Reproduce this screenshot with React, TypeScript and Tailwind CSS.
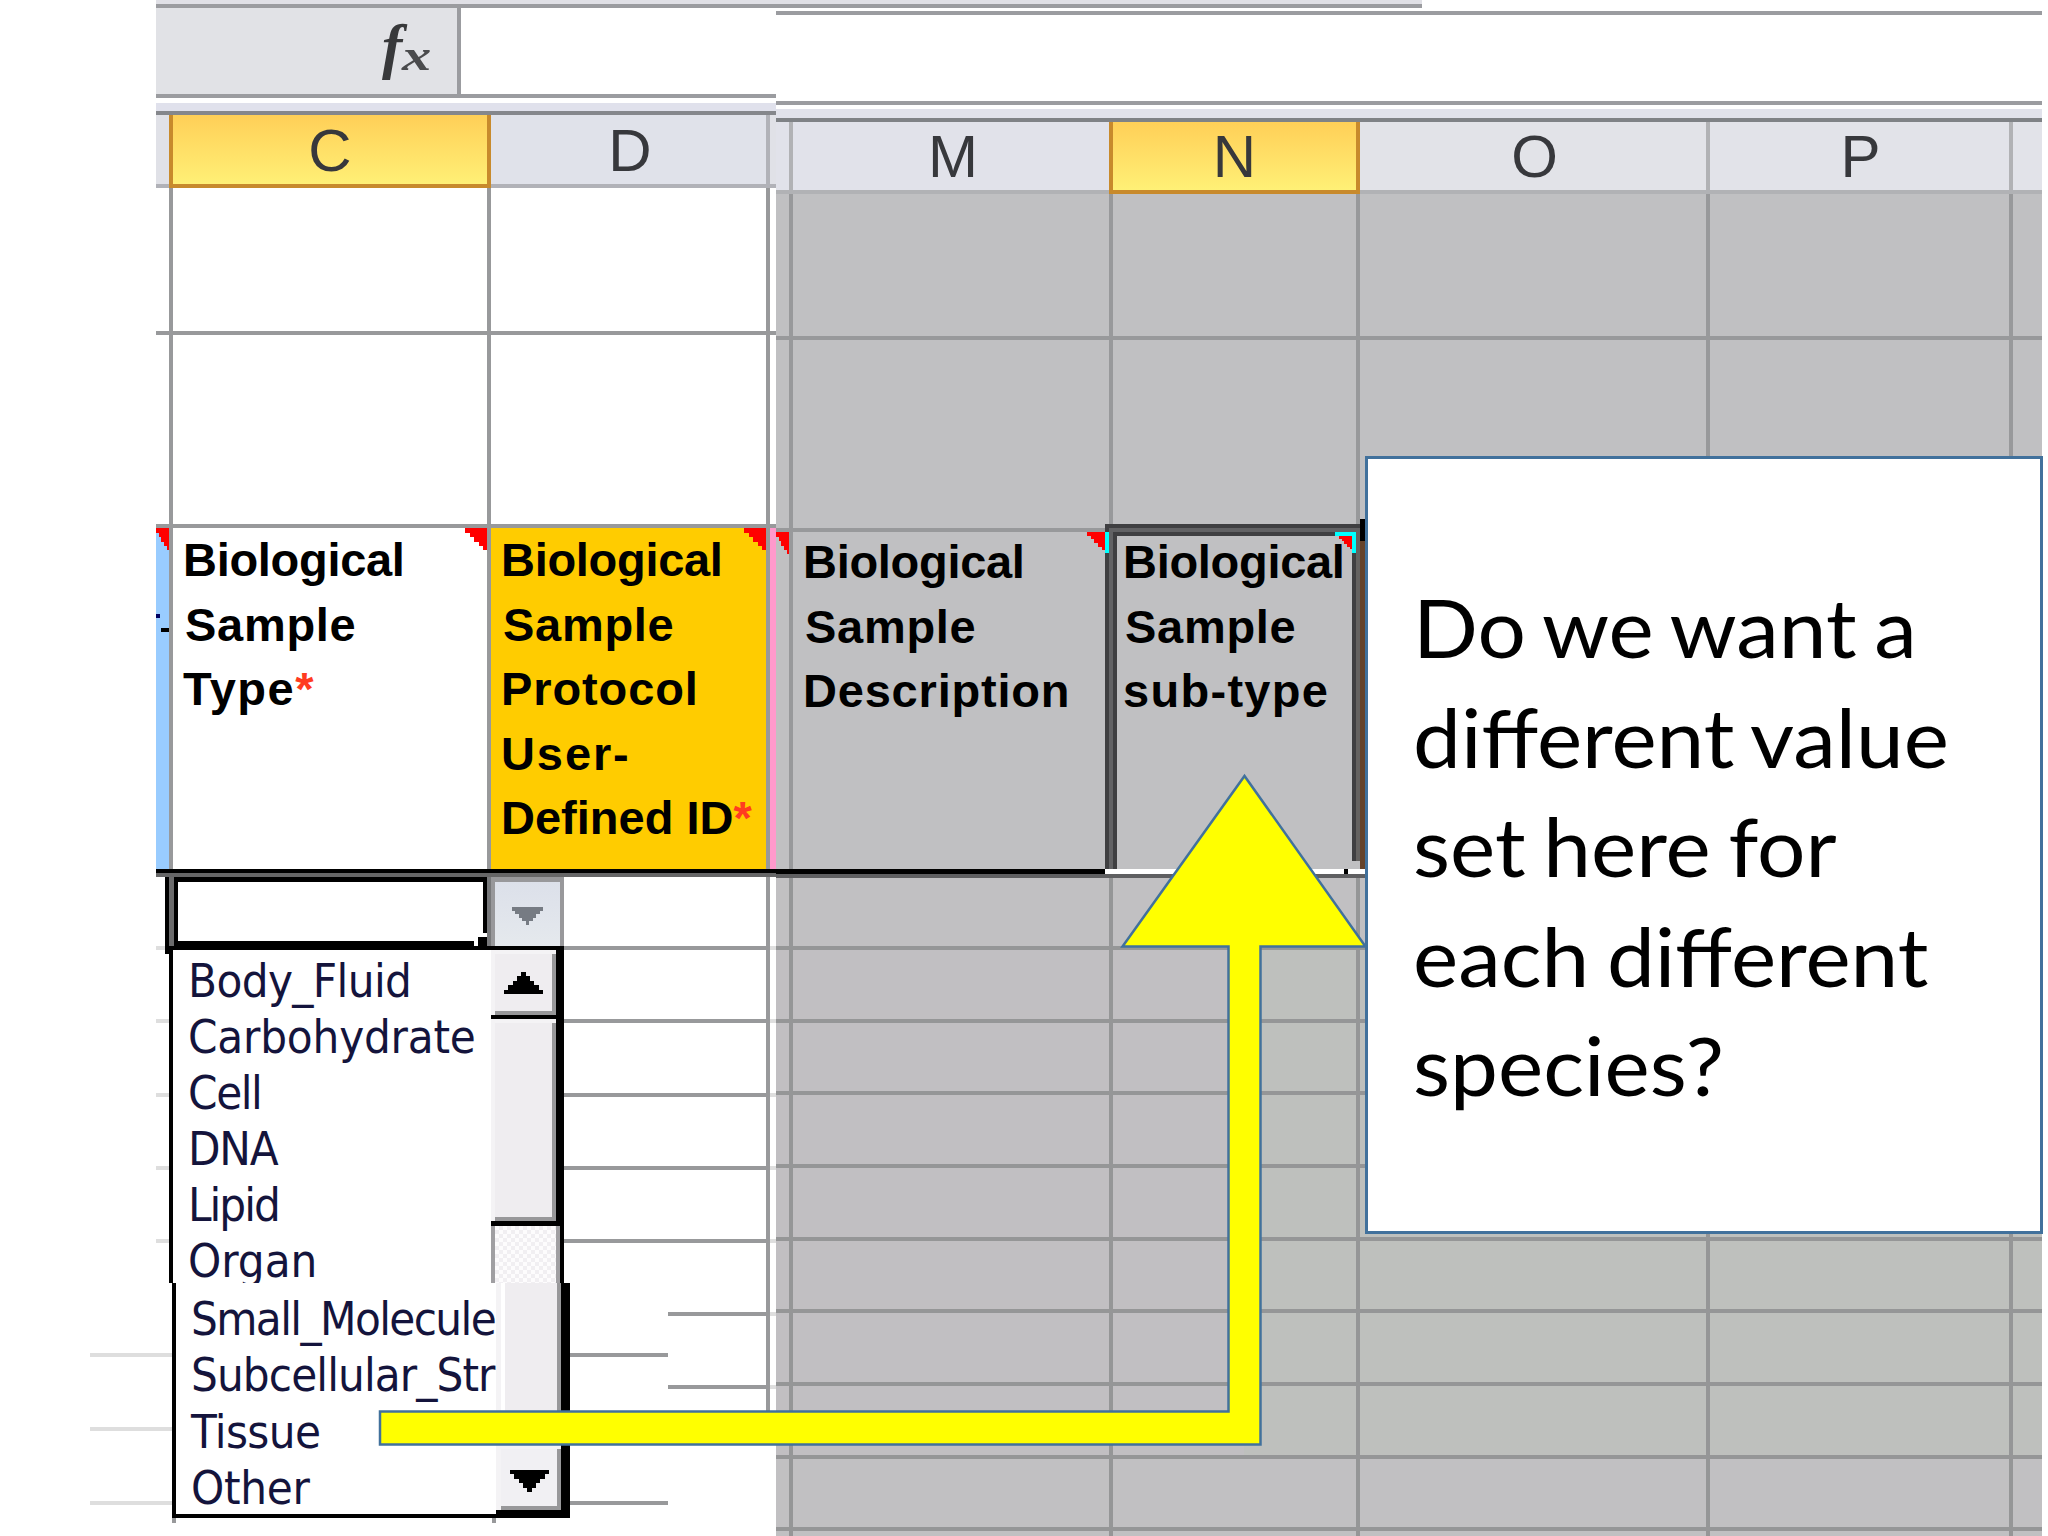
import React from 'react';

interface Row {
    height: string;
    faded?: boolean;
}

interface Line {
    text: string;
    className: string;
}

const SAMPLE_TYPES: Line[] = [
    { text: 'Body_Fluid', className: 'tracking-[-0.6px]' },
    { text: 'Carbohydrate', className: 'tracking-[-0.2px]' },
    { text: 'Cell', className: 'tracking-[-1.4px]' },
    { text: 'DNA', className: 'tracking-[-1.2px]' },
    { text: 'Lipid', className: 'tracking-[-2px]' },
    { text: 'Organ', className: 'tracking-[0px]' },
];

const MORE_SAMPLE_TYPES: Line[] = [
    { text: 'Small_Molecule', className: 'tracking-[-1.6px]' },
    { text: 'Subcellular_Str', className: 'tracking-[-0.9px]' },
    { text: 'Tissue', className: 'tracking-[-0.6px]' },
    { text: 'Other', className: 'tracking-[-0.3px]' },
];

const BIOLOGICAL: Line = { text: 'Biological', className: 'tracking-[-0.3px]' };
const SAMPLE: Line = { text: 'Sample', className: 'ml-[2px] tracking-[0.7px]' };

const LEFT_COLS = ['w-[17px]', 'w-[318px]', 'w-[279px]'];
const RIGHT_COLS = ['w-[17px]', 'w-[320px]', 'w-[247px]', 'w-[350px]', 'w-[303px]'];

const LEFT_ROWS: Row[] = [
    { height: 'h-[73px]' },
    { height: 'h-[73px]' },
    { height: 'h-[74px]' },
    { height: 'h-[73px]' },
    { height: 'h-[73px]' },
    { height: 'h-[73px]' },
    { height: 'h-[73px]' },
];

const RIGHT_ROWS: Row[] = [
    { height: 'h-[72px]' },
    { height: 'h-[73px]', faded: true },
    { height: 'h-[72px]', faded: true },
    { height: 'h-[73px]', faded: true },
    { height: 'h-[73px]', faded: true },
    { height: 'h-[72px]', faded: true },
    { height: 'h-[73px]', faded: true },
    { height: 'h-[73px]', faded: true },
    { height: 'h-[72px]' },
];

const RedCorner: React.FC<{ className: string }> = ({ className }) => (
    <svg className={`absolute ${className}`} viewBox="0 0 22 22" preserveAspectRatio="none" fill="#ff0000" shapeRendering="crispEdges">
        <path d="M0 0H22V22H18V18H14V14H9V9H5V5H0Z" />
    </svg>
);

const Triangle: React.FC<{ up?: boolean; className: string }> = ({ up, className }) => (
    <svg className={className} viewBox="0 0 9 5" preserveAspectRatio="none" fill="currentColor" shapeRendering="crispEdges">
        {up ? <path d="M4 0h1v1h1v1h1v1h1v1h1v1H0V4h1V3h1V2h1V1h1z" /> : <path d="M0 0h9v1H8v1H7v1H6v1H5v1H4V4H3V3H2V2H1V1H0z" />}
    </svg>
);

const HeaderText: React.FC<{ lines: Line[]; required?: boolean; className: string }> = ({ lines, required, className }) => (
    <div className={`whitespace-nowrap font-['Liberation_Sans'] font-bold text-[47px] leading-[64.6px] text-black ${className}`}>
        {lines.map((line, i) => (
            <div key={line.text} className={line.className}>
                {line.text}
                {required && i === lines.length - 1 && <span className="text-[#ff3b20]">*</span>}
            </div>
        ))}
    </div>
);

const EmptyRow: React.FC<{ cols: string[]; height: string }> = ({ cols, height }) => (
    <div className={`flex shrink-0 ${height}`}>
        {cols.map((w, i) => (
            <div key={i} className={`shrink-0 border-r-4 border-b-4 border-[#98999b] ${w}`} />
        ))}
        <div className="grow border-b-4 border-[#98999b]" />
    </div>
);

const LeftSheet: React.FC = () => (
    <div className="ml-[156px] w-[620px] shrink-0">
        <div className="flex h-[90px] border-b-4 border-[#9b9ca0]">
            <div className="w-[305px] bg-[#e1e2e6] border-r-4 border-[#9b9ca0] relative">
                <span className="absolute left-[226px] top-[5px] font-['Liberation_Serif'] font-bold italic text-[61px] leading-[68px] text-[#38393b]">f</span>
                <span className="absolute left-[246px] top-[19px] origin-left scale-x-130 font-['Liberation_Serif'] font-bold italic text-[45px] leading-[56px] text-[#4a4b4d]">x</span>
            </div>
        </div>
        <div className="h-[5px]" />
        <div className="h-[12px] bg-[#e0e1ec] border-b-4 border-[#85878c]" />
        <div className="flex h-[73px] font-['Liberation_Sans'] text-[60px] leading-[72px] text-center text-[#37383c]">
            <div className="w-[13px] bg-[#e0e1e7] border-b-4 border-[#b1b2b8]" />
            <div className="w-[322px] border-4 border-t-0 border-[#c88a2c] bg-linear-to-b from-[#ffcf57] to-[#fff076]">C</div>
            <div className="w-[279px] bg-[#e0e2ea] border-r-4 border-b-4 border-[#b1b2b8] pl-[3px]">D</div>
            <div className="grow bg-[#e0e1e7] border-b-4 border-[#b1b2b8]" />
        </div>
        <EmptyRow cols={LEFT_COLS} height="h-[147px]" />
        <EmptyRow cols={LEFT_COLS} height="h-[193px]" />
        <div className="flex h-[341px]">
            <div className="relative w-[17px] bg-[#99ccff] border-r-4 border-[#98999b]">
                <RedCorner className="right-0 top-0 w-[13px] h-[22px]" />
                <div className="absolute left-0 top-[86px] w-[4px] h-[4px] bg-[#000060]" />
                <div className="absolute left-[5px] top-[100px] w-[8px] h-[4px] bg-black" />
            </div>
            <div className="relative w-[318px] border-r-4 border-[#98999b]">
                <HeaderText
                    lines={[BIOLOGICAL, SAMPLE, { text: 'Type', className: 'tracking-[1.5px]' }]}
                    required
                    className="pl-[10px]"
                />
                <RedCorner className="right-0 top-0 w-[22px] h-[22px]" />
            </div>
            <div className="relative w-[279px] bg-[#ffcc00] border-r-4 border-[#98999b]">
                <HeaderText
                    lines={[
                        BIOLOGICAL,
                        SAMPLE,
                        { text: 'Protocol', className: 'tracking-[0.9px]' },
                        { text: 'User-', className: 'tracking-[1.9px]' },
                        { text: 'Defined ID', className: 'tracking-[0px]' },
                    ]}
                    required
                    className="pl-[10px]"
                />
                <RedCorner className="right-0 top-0 w-[22px] h-[22px]" />
            </div>
            <div className="grow bg-[#ff99cc]" />
        </div>
        <div className="h-[8px] bg-[#666667] border-t-4 border-black" />
        {LEFT_ROWS.map((row, i) => (
            <div key={i} className={`flex ${row.height}`}>
                <div className="w-[17px] border-b-4 border-[#dedede]" />
                <div className="w-[597px] border-r-4 border-b-4 border-[#98999b]" />
                <div className="grow border-b-4 border-[#dedede]" />
            </div>
        ))}
        <div className="h-[22px] w-[614px] border-r-4 border-[#98999b]" />
    </div>
);

const RightSheet: React.FC = () => (
    <div className="w-[1266px] shrink-0">
        <div className="h-[7px] border-b-4 border-[#9b9ca0]" />
        <div className="h-[90px] border-b-4 border-[#9b9ca0]" />
        <div className="h-[4px]" />
        <div className="h-[13px] bg-[#e1e2eb] border-b-4 border-[#7f8286]" />
        <div className="flex h-[72px] font-['Liberation_Sans'] text-[60px] leading-[70px] text-center text-[#37383c]">
            <div className="w-[17px] bg-[#e1e2ea] border-r-4 border-b-4 border-[#b1b2b5]" />
            <div className="w-[316px] bg-[#e1e2ea] border-b-4 border-[#b1b2b5] pl-[4px]">M</div>
            <div className="w-[251px] border-4 border-t-0 border-[#c88a2c] bg-linear-to-b from-[#ffcf57] to-[#fff076]">N</div>
            <div className="w-[350px] bg-[#e2e3e8] border-r-4 border-b-4 border-[#b1b2b5] pl-[3px]">O</div>
            <div className="w-[303px] bg-[#e2e3e9] border-r-4 border-b-4 border-[#b1b2b5] pl-[2px]">P</div>
            <div className="grow bg-[#e2e3e9] border-b-4 border-[#b1b2b5]" />
        </div>
        <div className="bg-[#c0c0c2]">
            <EmptyRow cols={RIGHT_COLS} height="h-[146px]" />
            <EmptyRow cols={RIGHT_COLS} height="h-[192px]" />
            <div className="flex h-[337px]">
                <div className="relative w-[17px] border-r-4 border-[#98999b]">
                    <RedCorner className="right-0 top-0 w-[13px] h-[22px]" />
                </div>
                <div className="relative w-[312px]">
                    <HeaderText
                        lines={[BIOLOGICAL, SAMPLE, { text: 'Description', className: 'tracking-[0.8px]' }]}
                        className="pl-[10px] -mt-[2px]"
                    />
                    <RedCorner className="right-0 top-0 w-[18px] h-[18px]" />
                </div>
                {/* selected sub-type cell */}
                <div className="relative w-[260px]">
                    <div className="absolute left-0 -top-[8px] h-[345px] w-[260px] border-[#3f3f41] border-l-4 border-t-4" />
                    <div className="absolute left-[4px] -top-[4px] h-[341px] w-[252px] border-[#626264] border-l-4 border-t-4" />
                    <div className="absolute left-[8px] top-0 h-[337px] w-[244px] border-[#3f3f41] border-l-4 border-t-4" />
                    <div className="absolute left-[247px] top-0 h-[329px] w-[4px] bg-[#3f3f41]" />
                    <div className="absolute left-[251px] top-0 h-[329px] w-[4px] bg-[#646260]" />
                    <div className="absolute left-[255px] top-0 h-[337px] w-[5px] bg-[#65432a]" />
                    <div className="absolute left-[255px] -top-[13px] h-[22px] w-[6px] bg-black" />
                    <div className="absolute left-0 top-0 h-[21px] w-[4px] bg-[#00ffff]" />
                    <div className="absolute left-[230px] top-0 h-[21px] w-[21px] border-t-4 border-r-4 border-[#00ffff]" />
                    <RedCorner className="left-[234px] top-[4px] w-[13px] h-[13px]" />
                    <HeaderText
                        lines={[BIOLOGICAL, SAMPLE, { text: 'sub-type', className: 'tracking-[1.3px]' }]}
                        className="relative pl-[18px] -mt-[2px]"
                    />
                </div>
            </div>
            <div className="flex h-[9px] border-b-4 border-[#5f5f61]">
                <div className="w-[329px] bg-black" />
                <div className="w-[239px] bg-white" />
                <div className="w-[4px] bg-black" />
                <div className="grow bg-white" />
            </div>
            {RIGHT_ROWS.map((row, i) => (
                <div key={i} className={`flex ${row.height} ${row.faded ? 'bg-linear-to-r from-[#c1bfc2] from-[37%] to-[#bec0bd] to-[37%]' : 'bg-[#c1c0c2]'}`}>
                    {RIGHT_COLS.map((w, j) => (
                        <div key={j} className={`shrink-0 border-r-4 border-b-4 border-[#959697] ${w}`} />
                    ))}
                    <div className="grow border-b-4 border-[#959697]" />
                </div>
            ))}
            <div className="flex h-[5px]">
                {RIGHT_COLS.map((w, j) => (
                    <div key={j} className={`shrink-0 border-r-4 border-[#959697] ${w}`} />
                ))}
            </div>
        </div>
    </div>
);

const Dropdown: React.FC = () => (
    <div className="absolute left-[165px] top-[877px] w-[399px]">
        {/* active cell and its dropdown button */}
        <div className="flex h-[69px]">
            <div className="h-[77px] w-[4px] bg-black" />
            <div className="w-[5px] bg-[#6b6b6c]" />
            <div className="relative w-[313px] border-4 border-t-[5px] border-b-[5px] border-black bg-white">
                <div className="absolute -right-[4px] -bottom-[5px] h-[13px] w-[13px] border-l-4 border-t-4 border-white bg-black" />
            </div>
            <div className="w-[4px] bg-[#77787a]" />
            <div className="flex w-[73px] justify-center border-4 border-t-[5px] border-b-0 border-[#98989b] bg-linear-to-b from-[#dce0ea] to-[#e5e9ed] pt-[25px]">
                <Triangle className="h-[18px] w-[31px] text-[#767b83]" />
            </div>
        </div>
        <div className="ml-[4px] flex h-[337px] border-t-4 border-l-4 border-black bg-white">
            <div className="w-[318px] pl-[15px] pt-[3px] whitespace-nowrap font-['DejaVu_Sans_Condensed','DejaVu_Sans'] [font-stretch:condensed] text-[47px] leading-[56px] text-[#14143c]">
                {SAMPLE_TYPES.map((t) => (
                    <div key={t.text} className={t.className}>{t.text}</div>
                ))}
            </div>
            <div className="flex w-[73px] flex-col">
                <div className="flex h-[65px] justify-center border-r-8 border-black bg-[#f4f3f5]">
                    <div className="ml-[4px] mt-[4px] flex h-[61px] w-full justify-center border-r-4 border-b-4 border-[#98989a] bg-[#efedf0] pt-[18px]">
                        <Triangle up className="h-[22px] w-[39px] text-black" />
                    </div>
                </div>
                <div className="h-[4px] bg-black" />
                <div className="h-[202px] border-r-8 border-black bg-[#f4f3f5] pl-[4px] pt-[4px]">
                    <div className="h-full border-r-4 border-b-4 border-[#98989a] bg-[#efedf0]" />
                </div>
                <div className="h-[5px] bg-black" />
                <div className="grow border-r-4 border-black">
                    <div className="h-full border-x-4 border-[#a09fa2] bg-[#f8f6f9] bg-[repeating-conic-gradient(#f1eff2_0_25%,#fdfcfd_0_50%)] bg-size-[8px_8px]" />
                </div>
            </div>
        </div>
    </div>
);

// second half of the list, continued one step to the right
const DropdownContinued: React.FC = () => (
    <div className="absolute left-[90px] top-[1283px] h-[253px] w-[578px] bg-white">
        <div className="h-[74px] border-b-4 border-[#dedede]" />
        <div className="h-[74px] border-b-4 border-[#dedede]" />
        <div className="h-[74px] border-b-4 border-[#dedede]" />
        <div className="absolute left-[480px] top-0 w-[98px]">
            <div className="h-[74px] border-b-4 border-[#98999b]" />
            <div className="h-[74px] border-b-4 border-[#98999b]" />
            <div className="h-[74px] border-b-4 border-[#98999b]" />
        </div>
        <div className="absolute left-[82px] top-[235px] h-[5px] w-[324px] border-x-4 border-[#98999b]" />
        <div className="absolute left-[82px] top-0 flex h-[235px] w-[398px] border-l-4 border-b-4 border-black bg-white">
            <div className="w-[320px] pl-[15px] pt-[8px] whitespace-nowrap font-['DejaVu_Sans_Condensed','DejaVu_Sans'] [font-stretch:condensed] text-[47px] leading-[56.4px] text-[#14143c]">
                {MORE_SAMPLE_TYPES.map((t) => (
                    <div key={t.text} className={t.className}>{t.text}</div>
                ))}
            </div>
            <div className="flex w-[74px] flex-col border-r-[9px] border-b-4 border-black bg-[#f4f3f5] pl-[5px]">
                <div className="h-[160px] border-r-4 border-b-4 border-[#98989a] border-l-4 border-l-white bg-[#efedf0]" />
                <div className="h-[6px]" />
                <div className="flex grow justify-center border-r-4 border-b-4 border-[#98989a] bg-[#f1f0f3] pt-[21px]">
                    <Triangle className="h-[22px] w-[39px] text-black" />
                </div>
            </div>
        </div>
    </div>
);

const Arrow: React.FC = () => (
    <svg className="absolute left-[370px] top-[765px]" width="1000" height="690" viewBox="370 765 1000 690">
        <path d="M380 1411.500H1228.500V946.500H1122.500L1244.500 776L1365.500 946.500H1260.500V1444.500H380Z" fill="#ffff00" stroke="#41719c" strokeWidth="2.500" />
    </svg>
);

const App: React.FC = () => (
    <div className="relative h-[1536px] w-[2048px] overflow-hidden bg-white">
        <div className="ml-[156px] h-[8px] w-[1266px] border-b-4 border-[#9b9ca0] bg-[#e0e0e6]" />
        <div className="flex h-[1528px]">
            <LeftSheet />
            <RightSheet />
        </div>
        <Dropdown />
        <DropdownContinued />
        <Arrow />
        <div className="absolute left-[1365px] top-[456px] flex h-[778px] w-[678px] items-center border-[3px] border-[#41719c] bg-white pl-[45px] pt-[2px]">
            <p className="origin-left scale-x-[1.043] whitespace-nowrap font-['Lato'] text-[82px] leading-[109.4px] [word-spacing:-4px] text-black">
                Do we want a<br />
                different value<br />
                set here for<br />
                each different<br />
                species?
            </p>
        </div>
    </div>
);

export default App;
